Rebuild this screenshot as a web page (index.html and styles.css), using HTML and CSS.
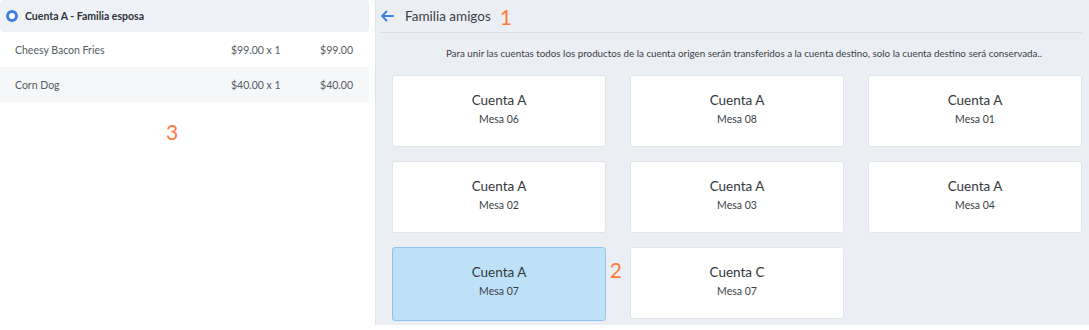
FILE: index.html
```html
<!DOCTYPE html>
<html lang="es">
<head>
    <meta charset="UTF-8">
    <title>Unir cuentas</title>
    <link rel="stylesheet" href="styles.css">
</head>
<body>
    <div class="layout">
        <aside class="account-panel">
            <div class="account-head">
                <span class="radio"></span>
                <span>Cuenta A - Familia esposa</span>
            </div>
            <div class="item-row">
                <span class="item-name">Cheesy Bacon Fries</span>
                <span class="item-price">$99.00 x 1</span>
                <span class="item-total">$99.00</span>
            </div>
            <div class="item-row alt">
                <span class="item-name">Corn Dog</span>
                <span class="item-price">$40.00 x 1</span>
                <span class="item-total">$40.00</span>
            </div>
            <div class="marker marker-3">3</div>
        </aside>

        <main class="merge-panel">
            <div class="merge-head">
                <svg class="back" width="14" height="12" viewBox="0 0 14 12">
                    <path d="M13 6H2M6.5 1.5L2 6l4.5 4.5" fill="none" stroke="#3d7fe0" stroke-width="1.8" stroke-linecap="round" stroke-linejoin="round"/>
                </svg>
                <span class="group-name">Familia amigos</span>
                <span class="marker">1</span>
            </div>
            <p class="hint">Para unir las cuentas todos los productos de la cuenta origen serán transferidos a la cuenta destino, solo la cuenta destino será conservada..</p>

            <div class="cards">
                <div class="card"><div class="card-title">Cuenta A</div><div class="card-sub">Mesa 06</div></div>
                <div class="card"><div class="card-title">Cuenta A</div><div class="card-sub">Mesa 08</div></div>
                <div class="card"><div class="card-title">Cuenta A</div><div class="card-sub">Mesa 01</div></div>
                <div class="card"><div class="card-title">Cuenta A</div><div class="card-sub">Mesa 02</div></div>
                <div class="card"><div class="card-title">Cuenta A</div><div class="card-sub">Mesa 03</div></div>
                <div class="card"><div class="card-title">Cuenta A</div><div class="card-sub">Mesa 04</div></div>
                <div class="card selected">
                    <div class="card-title">Cuenta A</div><div class="card-sub">Mesa 07</div>
                    <span class="marker marker-2">2</span>
                </div>
                <div class="card"><div class="card-title">Cuenta C</div><div class="card-sub">Mesa 07</div></div>
            </div>
        </main>
    </div>
</body>
</html>
```

FILE: styles.css
```css
body {
    margin: 0;
    font-family: Lato, "Open Sans", sans-serif;
    color: #3a3f45;
    background: #fff;
}

.layout {
    display: flex;
    height: 325px;
}

.account-panel {
    width: 369px;
    margin-right: 6px;
    background: #fff;
}

.account-head {
    display: flex;
    align-items: center;
    height: 32px;
    padding-left: 6px;
    background: #eef2f7;
    border-radius: 4px;
    font-size: 10.5px;
    font-weight: bold;
    color: #2f343a;
}

.radio {
    width: 6px;
    height: 6px;
    margin-right: 7px;
    border: 3px solid #3d7fe0;
    border-radius: 50%;
    background: #fff;
}

.item-row {
    display: flex;
    align-items: center;
    height: 35px;
    padding: 0 16px 0 15px;
    font-size: 10.5px;
    color: #555b62;
}

.item-row.alt {
    background: #f5f7f9;
}

.item-name {
    flex: 1;
}

.item-price {
    width: 82px;
}

.item-total {
    width: 40px;
    text-align: right;
}

.marker {
    color: #ff7a3a;
    font-size: 21px;
    line-height: 1;
}

.marker-3 {
    margin: 19px 0 0 166px;
}

.merge-panel {
    flex: 1;
    background: #ebeff4;
    border-left: 1px solid #e1e5ea;
    padding: 0 7px 0 16px;
}

.merge-head {
    display: flex;
    align-items: center;
    height: 32px;
    margin-left: -12px;
    padding-left: 0;
    border-bottom: 1px solid #d9dee4;
}

.back {
    margin-right: 11px;
}

.group-name {
    font-size: 13.5px;
    color: #3a3f45;
    margin-right: 9px;
}

.hint {
    margin: 14px 0 16px;
    padding-left: 14px;
    text-align: center;
    font-size: 9.8px;
    color: #3a3f45;
}

.cards {
    display: grid;
    grid-template-columns: repeat(3, 1fr);
    column-gap: 24px;
    row-gap: 14px;
}

.card {
    position: relative;
    height: 72px;
    box-sizing: border-box;
    background: #fff;
    border: 1px solid #e1e5ea;
    border-radius: 3px;
    text-align: center;
    padding-top: 16px;
}

.card.selected {
    background: #bee1f7;
    border-color: #8ec6f0;
    height: 74px;
}

.card-title {
    font-size: 13.5px;
    color: #33383e;
}

.card-sub {
    margin-top: 5px;
    font-size: 10.5px;
    color: #3a3f45;
}

.marker-2 {
    position: absolute;
    right: -17px;
    top: 11px;
}
```
